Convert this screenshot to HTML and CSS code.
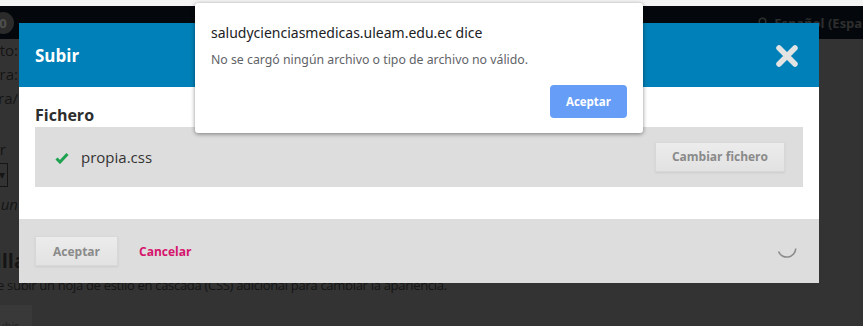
FILE: index.html
```html
<!DOCTYPE html>
<html lang="es">
<head>
    <meta charset="UTF-8" />
    <title>Subir fichero</title>
    <link rel="stylesheet" href="styles.css">
</head>
<body>
    <div class="page">
        <div class="top-strip"></div>
        <header class="navbar">
            <span class="badge">0</span>
            <span class="lang">
                <svg class="lang-icon" width="11" height="11" viewBox="0 0 11 11"><circle cx="4.5" cy="4.5" r="3.3" fill="none" stroke="#2e2e2e" stroke-width="1.6"/><line x1="7" y1="7" x2="10" y2="10" stroke="#2e2e2e" stroke-width="1.8"/></svg>
                Español (España)
            </span>
        </header>
        <main class="content">
            <div class="clip first"><span>Contexto:</span></div>
            <div class="clip"><span>Barra:</span></div>
            <div class="clip"><span>Barra/</span></div>
            <div class="clip small"><span>r</span></div>
            <div class="select-stub">▾</div>
            <div class="clip italic"><span>Sube un</span></div>
            <h2 class="clip section"><span>Plantilla</span></h2>
            <p class="desc">e subir un hoja de estilo en cascada (CSS) adicional para cambiar la apariencia.</p>
            <div class="stub-button">Subir</div>
        </main>
    </div>

    <div class="modal">
        <div class="modal-header">
            <h1>Subir</h1>
            <svg class="close" width="24" height="24" viewBox="0 0 24 24"><path d="M4 4 L20 20 M20 4 L4 20" stroke="#e3e3e3" stroke-width="5.5" stroke-linecap="round"/></svg>
        </div>
        <div class="modal-body">
            <h3>Fichero</h3>
            <div class="file-box">
                <svg class="check" width="14" height="12" viewBox="0 0 14 12"><path d="M1.5 6.5 L5 10 L12.5 2" fill="none" stroke="#1ea24f" stroke-width="3"/></svg>
                <span class="file-name">propia.css</span>
                <button class="btn btn-change">Cambiar fichero</button>
            </div>
        </div>
        <div class="modal-footer">
            <button class="btn">Aceptar</button>
            <a class="cancel" href="#">Cancelar</a>
            <svg class="spinner" width="24" height="24" viewBox="0 0 24 24"><path d="M3.5 13.5 A9 9 0 0 0 20.8 10.5" fill="none" stroke="#8c8c8c" stroke-width="1.6"/></svg>
        </div>
    </div>

    <div class="alert">
        <div class="alert-title">saludycienciasmedicas.uleam.edu.ec dice</div>
        <div class="alert-msg">No se cargó ningún archivo o tipo de archivo no válido.</div>
        <div class="alert-actions">
            <button class="alert-btn">Aceptar</button>
        </div>
    </div>
</body>
</html>
```

FILE: styles.css
```css
body {
    margin: 0;
    font-family: 'Open Sans', sans-serif;
    background-color: #333333;
    overflow: hidden;
}
.page {
    height: 326px;
    overflow: hidden;
    background-color: #333333;
}
.top-strip {
    height: 6px;
    background-color: #f4f4f4;
}
.navbar {
    height: 33px;
    background-color: #04080c;
    display: flex;
    align-items: center;
    justify-content: space-between;
}
.badge {
    width: 22px;
    height: 22px;
    margin-left: -8px;
    border-radius: 50%;
    background-color: #2b2b2b;
    color: #505050;
    font-size: 13px;
    font-weight: 700;
    display: flex;
    align-items: center;
    justify-content: center;
}
.lang {
    display: flex;
    align-items: center;
    gap: 5px;
    margin-right: -20px;
    color: #2e2e2e;
    font-size: 13px;
    font-weight: 700;
    white-space: nowrap;
}
.content {
    color: #151515;
    font-size: 15px;
}
.clip {
    width: 18px;
    display: flex;
    justify-content: flex-end;
    overflow: hidden;
    white-space: nowrap;
    height: 24px;
    line-height: 24px;
    margin: 0;
}
.first { margin-top: -1px; }
.small { margin-top: 27px; width: 6px; }
.select-stub {
    width: 30px;
    height: 24px;
    margin: 2px 0 0 -22px;
    border: 1px solid #151515;
    text-align: right;
    padding-right: 2px;
    box-sizing: border-box;
    font-size: 12px;
    line-height: 22px;
}
.italic { font-style: italic; margin-top: 5px; }
.section {
    font-size: 20px;
    font-weight: 700;
    margin-top: 33px;
    width: 26px;
}
.desc {
    margin: 0 0 0 -3px;
    font-size: 13px;
    letter-spacing: -0.3px;
    line-height: 24px;
    white-space: nowrap;
}
.stub-button {
    width: 40px;
    height: 30px;
    margin: 8px 0 0 -8px;
    background-color: #393939;
    font-size: 11px;
    line-height: 42px;
    color: #222;
}

.modal {
    position: absolute;
    left: 19px;
    top: 23px;
    width: 800px;
    background-color: #ffffff;
}
.modal-header {
    height: 64px;
    background-color: #0080b8;
    display: flex;
    align-items: center;
    justify-content: space-between;
    padding: 0 20px 0 16px;
}
.modal-header h1 {
    margin: 0;
    color: #ffffff;
    font-size: 17px;
    font-weight: 700;
}
.close { margin-top: 1px; }
.modal-body {
    padding: 16px 16px 32px;
}
.modal-body h3 {
    margin: 0;
    color: #2d2d2d;
    font-size: 16px;
    font-weight: 700;
    line-height: 24px;
}
.file-box {
    height: 60px;
    background-color: #dddddd;
    display: flex;
    align-items: center;
    padding: 0 18px 0 20px;
}
.check { margin-top: 1px; }
.file-name {
    margin-left: 12px;
    color: #333333;
    font-size: 15px;
    flex-grow: 1;
    margin-top: -1px;
}
.btn {
    font-family: 'Open Sans', sans-serif;
    font-size: 12px;
    font-weight: 700;
    color: #8a8a8a;
    background: linear-gradient(#ececec, #e2e2e2);
    border: 1px solid #d8d8d8;
    box-shadow: 0 1px 2px rgba(0,0,0,0.08);
    height: 30px;
    padding: 0 17px;
}
.btn-change { padding: 0 16px; margin-top: -1px; }
.modal-footer {
    height: 64px;
    background-color: #dddddd;
    display: flex;
    align-items: center;
    padding: 0 20px 0 16px;
}
.cancel {
    margin-left: 21px;
    color: #d6136c;
    font-size: 12px;
    font-weight: 700;
    text-decoration: none;
    flex-grow: 1;
}
.spinner { margin-top: -2px; }

.alert {
    position: absolute;
    left: 195px;
    top: 3px;
    width: 448px;
    height: 130px;
    box-sizing: border-box;
    padding: 20px 16px 0 16px;
    background-color: #ffffff;
    border-radius: 3px;
    box-shadow: 0 1px 4px rgba(0,0,0,0.45);
    font-family: 'Noto Sans', 'Open Sans', sans-serif;
}
.alert-title {
    color: #202124;
    font-size: 14px;
    line-height: 20px;
}
.alert-msg {
    margin-top: 8px;
    color: #5f6368;
    font-size: 12.3px;
    line-height: 18px;
}
.alert-actions {
    display: flex;
    justify-content: flex-end;
    margin-top: 16px;
}
.alert-btn {
    width: 77px;
    height: 33px;
    border: none;
    border-radius: 4px;
    background-color: #669df6;
    color: #ffffff;
    font-family: 'Open Sans', sans-serif;
    font-size: 11.5px;
    font-weight: 700;
}
```
